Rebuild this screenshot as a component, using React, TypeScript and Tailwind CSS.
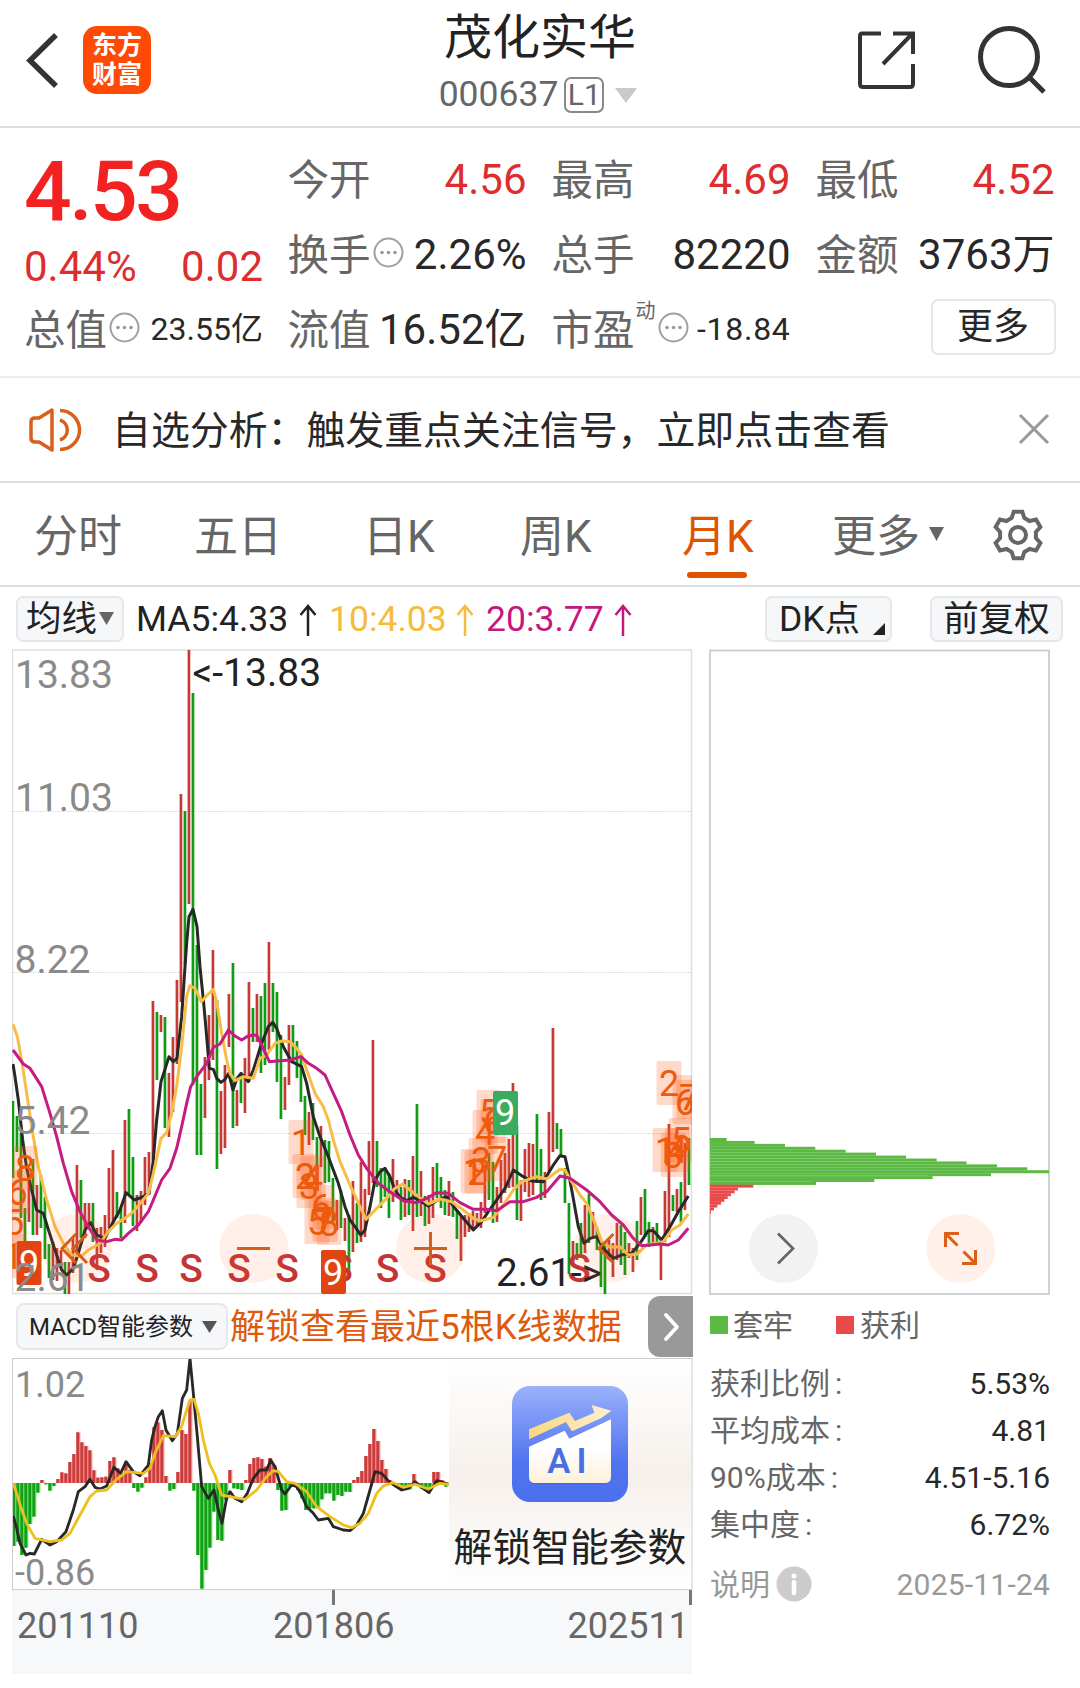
import React from 'react';

interface Candle {
  up: boolean;
  top: number;
  bottom: number;
}

// Monthly candles, left to right: direction, high, low
const CANDLE_DATA = `
g1101-1178 g1116-1152 g1133-1218 g1208-1242 r1175-1222 g1159-1235 r1185-1235 g1175-1228 g1197-1259 g1244-1278
r1242-1280 r1248-1281 r1250-1268 g1262-1294 r1262-1294 r1238-1273 r1165-1253 g1180-1238 r1203-1238 r1203-1228
g1203-1242 r1228-1270 r1227-1253 r1215-1247 r1168-1228 r1150-1225 g1192-1218 g1208-1238 r1120-1223 g1109-1195
g1157-1226 r1195-1231 r1191-1223 r1157-1205 r1152-1195 r1001-1160 g1012-1080 r1015-1032 g1017-1128 r1073-1137
r1037-1112 r980-1064 r794-1002 g811-965 r650-904 g693-1085 g945-1155 g1084-1155 r1057-1118 r1015-1080
r950-1060 g1000-1169 r1091-1154 r1065-1148 r994-1047 g963-1128 r1090-1126 g1075-1103 r1058-1113 r982-1082
g1008-1042 r994-1042 g996-1073 g983-1065 r942-1050 g983-1032 g992-1082 g1035-1119 r1077-1110 r1025-1085
g1025-1063 g1041-1078 g1055-1102 g1096-1135 r1112-1145 g1103-1140 g1137-1190 r1126-1167 g1140-1183 g1141-1182
g1178-1223 r1200-1230 g1190-1228 r1218-1241 g1215-1270 r1181-1252 g1203-1243 r1162-1242 r1189-1237 r1141-1195
r1040-1183 g1141-1187 g1168-1208 g1170-1197 g1173-1218 r1159-1202 r1180-1197 g1187-1220 r1179-1217 g1180-1215
r1156-1231 g1104-1217 r1171-1216 g1196-1226 r1195-1224 r1167-1218 g1163-1198 g1177-1208 g1190-1215 r1181-1216
g1192-1217 g1210-1239 r1215-1261 r1215-1237 r1213-1232 r1211-1229 r1213-1226 r1202-1228 r1165-1213 g1153-1200
g1162-1223 r1187-1222 r1160-1203 r1153-1193 r1139-1188 r1083-1187 g1125-1220 r1180-1221 r1149-1192 r1143-1197
r1144-1195 g1114-1183 g1149-1200 r1172-1198 r1112-1173 r1028-1152 g1123-1149 g1129-1157 g1168-1203 g1203-1274
r1241-1260 g1243-1260 g1223-1258 r1205-1253 g1194-1243 r1212-1238 g1228-1250 g1243-1287 g1243-1294 r1240-1260
r1243-1277 r1223-1260 g1225-1265 g1232-1275 r1243-1258 r1248-1272 g1221-1260 r1197-1235 g1189-1237 g1222-1247
r1227-1243 g1223-1242 r1238-1280 r1191-1242 r1124-1237 g1195-1211 r1189-1212 g1182-1222 r1143-1210 g1138-1185`;

const CANDLES: Candle[] = CANDLE_DATA.trim()
  .split(/\s+/)
  .map((item) => {
    const [top, bottom] = item.slice(1).split('-').map(Number);
    return { up: item[0] === 'r', top, bottom };
  });

// Lines and histogram use thirds of a pixel
const MA5 =
  '39,312 45,350 55,420 68,540 80,625 95,690 110,750 130,760 147,815 165,870 185,930 200,945 220,925 235,880 255,810 272,788 290,825 315,835 340,785 360,750 378,698 403,720 430,710 447,700 460,600 470,480 483,365 507,290 520,305 531,295 545,170 553,50 560,-50 567,-130 579,-152 591,-100 600,20 612,140 620,230 628,325 640,328 650,355 663,367 675,358 686,340 699,390 711,355 723,340 745,365 760,330 783,255 805,200 818,187 830,205 850,260 875,305 905,320 920,370 940,470 960,530 985,590 1015,670 1035,740 1050,780 1065,800 1082,825 1095,810 1110,740 1125,660 1140,635 1155,625 1170,650 1185,690 1200,712 1220,722 1240,712 1260,722 1285,738 1310,722 1340,710 1365,745 1390,775 1420,810 1445,785 1465,755 1490,720 1515,685 1540,630 1570,650 1595,663 1630,665 1660,615 1680,587 1695,590 1705,635 1717,700 1735,800 1752,850 1770,835 1790,830 1810,865 1840,895 1865,885 1895,880 1920,850 1945,812 1960,812 1985,840 2010,800 2035,755 2065,708';
const MA10 =
  '39,193 52,230 65,300 80,400 95,500 115,620 140,720 165,800 190,850 215,885 245,888 265,870 300,850 325,815 350,790 375,775 400,755 425,725 445,700 460,640 483,535 500,518 515,460 530,380 545,260 560,110 569,77 585,85 604,125 622,105 640,88 650,125 665,220 680,300 690,340 705,362 730,350 760,355 780,295 800,285 825,250 845,243 870,245 890,265 905,285 920,330 945,400 970,440 985,480 1000,540 1020,605 1050,675 1080,740 1098,778 1130,745 1160,715 1185,685 1208,672 1230,690 1255,710 1285,732 1320,717 1355,725 1390,750 1420,775 1440,783 1480,772 1510,735 1540,690 1565,665 1610,650 1640,657 1680,628 1695,630 1715,665 1740,705 1760,730 1785,790 1805,845 1830,862 1860,860 1885,885 1910,883 1940,855 1990,845 2015,810 2040,795 2065,762';
const MA20 =
  '39,270 70,312 90,325 125,380 150,460 170,530 190,610 215,695 240,755 265,800 290,840 320,845 345,838 365,840 385,820 415,795 445,755 460,720 485,660 510,625 530,565 545,500 560,430 572,380 590,350 620,310 640,262 660,252 685,210 705,228 725,240 745,227 770,225 785,255 808,305 830,303 870,300 903,290 925,310 950,325 975,345 1000,400 1025,455 1050,525 1075,585 1100,625 1135,670 1170,695 1210,722 1250,728 1280,715 1310,698 1345,700 1380,728 1420,748 1460,748 1490,752 1530,725 1570,725 1610,712 1640,695 1680,648 1710,655 1760,690 1800,725 1835,765 1870,795 1900,835 1925,857 1980,852 2005,855 2035,840 2065,805';

const DIF =
  '40,678 50,715 60,760 78,795 90,790 103,792 125,748 150,765 170,755 198,725 220,660 235,605 255,590 270,568 285,592 300,597 320,588 342,532 362,550 378,515 400,545 420,557 445,525 455,450 465,410 475,380 487,362 498,420 517,452 532,430 547,325 560,300 570,205 580,310 592,440 605,590 625,625 642,600 655,660 666,700 680,625 690,605 705,625 725,635 742,610 760,565 780,540 800,540 812,510 825,530 845,600 855,612 875,585 890,590 905,615 920,650 940,670 955,690 985,685 1000,710 1030,720 1050,722 1070,705 1090,670 1110,600 1125,545 1145,550 1170,578 1205,600 1225,595 1245,575 1265,592 1287,608 1310,572 1345,582';
const DEA =
  '40,580 50,610 62,650 80,700 105,745 150,755 185,750 210,730 240,675 270,620 290,603 320,600 350,568 380,545 430,550 450,535 465,490 490,437 525,440 545,410 560,360 570,330 582,328 595,370 610,450 628,520 645,555 665,615 690,620 735,628 770,600 800,560 820,542 835,545 860,575 885,580 920,605 950,650 990,680 1030,705 1055,713 1080,700 1105,670 1130,610 1150,588 1180,578 1210,592 1245,583 1285,597 1320,580 1347,583';

const MACD_ZERO = 579;
const MACD_TIPS = [
  768, 755, 795, 773, 702, 680, 608, 570, 583, 602, 588, 567, 547, 550, 516, 492, 427, 457, 468, 481, 541, 563, 562,
  560, 513, 502, 535, 550, 516, 540, 594, 605, 593, 562, 520, 412, 397, 420, 558, 602, 597, 546, 420, 432, 332, 602,
  795, 896, 840, 773, 665, 750, 752, 630, 540, 595, 597, 600, 570, 522, 504, 502, 507, 530, 504, 525, 600, 662, 660,
  590, 583, 600, 625, 660, 655, 655, 655, 628, 610, 610, 632, 615, 618, 605, 606, 570, 561, 543, 498, 462, 417, 453,
  510, 537, 570, 583, 590, 603, 598, 598, 552, 584, 597, 600, 598, 546, 546, 570, 590,
];

// Nine-turn counters: [label, centre x, centre y]
const COUNTERS: [string, number, number][] = [
  ['8', 25, 1168], ['6', 17.5, 1192], ['5', 14, 1222], ['1', 13, 1256],
  ['1', 301, 1142], ['2', 305, 1176], ['3', 309, 1186], ['4', 313, 1178], ['5', 317, 1222], ['6', 321, 1207], ['7', 325, 1220], ['8', 329, 1223],
  ['1', 473, 1171], ['2', 477, 1172], ['3', 481, 1160], ['4', 485, 1132], ['5', 489, 1112], ['6', 493, 1121], ['7', 497, 1159],
  ['1', 665, 1150], ['2', 669, 1083], ['3', 673, 1155], ['4', 677, 1150], ['5', 681, 1140], ['6', 685, 1102], ['7', 689, 1097],
];

const SELL_MARKS = [99, 147, 191, 239, 287, 341, 387.5, 435, 579];

const CHIPS_GREEN = [113, 197, 288, 379, 470, 561, 651, 743, 833, 924, 1015, 1080, 906, 731, 556, 381];
const CHIPS_RED = [193, 147, 137, 126, 116, 106, 96, 85, 75, 66];

const GEAR_POINTS = [0, 1, 2, 3, 4, 5]
  .flatMap((k) => {
    const a = (k * Math.PI) / 3;
    return [[-19, -51], [-13, -70], [13, -70], [19, -51]].map(
      ([x, y]) => `${x * Math.cos(a) - y * Math.sin(a)},${x * Math.sin(a) + y * Math.cos(a)}`
    );
  })
  .join(' ');

const Dots: React.FC = () => (
  <svg className="w-[31px] h-[31px] shrink-0 -mt-1.5 ml-[2px]" viewBox="0 0 31 31">
    <circle cx="15.5" cy="15.5" r="14" fill="none" stroke="#a0a0a0" strokeWidth="2" />
    <circle cx="9" cy="15.5" r="1.8" fill="#999" />
    <circle cx="15.5" cy="15.5" r="1.8" fill="#999" />
    <circle cx="22" cy="15.5" r="1.8" fill="#999" />
  </svg>
);

const Header: React.FC = () => (
  <header className="flex justify-between h-[128px] border-b-2 border-[#dcdcdc]">
    <div className="flex w-[400px] pl-[25px] pt-[26px]">
      <svg className="w-[36px] h-[68px]" viewBox="0 0 36 68" fill="none" stroke="#333" strokeWidth="5.5">
        <path d="M31 9 L5 34.5 L31 60" />
      </svg>
      <div className="ml-[22px] w-[68px] h-[68px] rounded-[14px] bg-[#ff4a05] text-white text-[25px] leading-[29px] font-bold text-center pt-[5px]">
        <p>东方</p>
        <p>财富</p>
      </div>
    </div>
    <div className="flex flex-col items-center w-[280px]">
      <h1 className="text-[48px] leading-[56px] mt-[10px] text-[#222]">茂化实华</h1>
      <div className="flex items-center h-[40px] mt-[9px] -ml-[4px] text-[#666]">
        <span className="text-[35.5px] leading-none">000637</span>
        <span className="ml-[6px] flex items-center justify-center w-[40px] h-[36px] border-2 border-[#888] rounded-[7px] text-[30px] leading-none">L1</span>
        <svg className="ml-[11px] w-[22px] h-[15px]" viewBox="0 0 22 15">
          <path d="M0 0H22L11 15Z" fill="#c9c9c9" />
        </svg>
      </div>
    </div>
    <div className="flex w-[400px] justify-end pt-[24px] pr-[32px]">
      <svg className="w-[60px] h-[70px]" viewBox="0 0 60 70" fill="none" stroke="#333" strokeWidth="4">
        <path d="M25 9.500H6Q4 9.500 4 12V60Q4 63 7 63H54Q57 63 57 60V40" />
        <path d="M37 9.500H57V30M56 10L27 40" />
      </svg>
      <svg className="ml-[60px] w-[72px] h-[80px]" viewBox="0 0 72 80" fill="none" stroke="#333" strokeWidth="5">
        <circle cx="33" cy="33" r="28.500" />
        <path d="M53 53L68 68" />
      </svg>
    </div>
  </header>
);

interface StatProps {
  label: string;
  value: string;
  red?: boolean;
  small?: boolean;
  dots?: boolean;
  sup?: string;
}

const Stat: React.FC<StatProps> = ({ label, value, red, small, dots, sup }) => (
  <div className="flex items-center justify-between w-[239px] whitespace-nowrap">
    <span className="relative flex items-center text-[#666] text-[41.500px] pt-[2px]">
      {label}
      {sup && <span className="ml-px w-[20px] -mt-[38px] text-[20px]">{sup}</span>}
      {dots && <Dots />}
    </span>
    <span className={`${small ? 'text-[32px]' : 'text-[42px]'} ${sup ? 'tracking-[0.7px]' : ''} ${red ? 'text-[#dd2d2d]' : 'text-[#282828]'}`}>{value}</span>
  </div>
);

const Quote: React.FC = () => (
  <section className="flex h-[250px] border-b-2 border-[#ececec] pt-[14px] pl-[24px] leading-[75px]">
    <div className="w-[239px]">
      <p className="text-[84px] leading-[100px] tracking-[-2.500px] font-medium text-[#f32222]">4.53</p>
      <div className="flex justify-between text-[42px] leading-[50px] text-[#dd2d2d]">
        <span>0.44%</span>
        <span>0.02</span>
      </div>
      <div className="flex h-[75px]">
        <Stat label="总值" value="23.55亿" small dots />
      </div>
    </div>
    <div className="grid grid-cols-[264px_264px_239px] grid-rows-[75px_75px_75px] ml-[24.500px]">
      <Stat label="今开" value="4.56" red />
      <Stat label="最高" value="4.69" red />
      <Stat label="最低" value="4.52" red />
      <Stat label="换手" value="2.26%" dots />
      <Stat label="总手" value="82220" />
      <Stat label="金额" value="3763万" />
      <Stat label="流值" value="16.52亿" />
      <Stat label="市盈" value="-18.84" small dots sup="动" />
      <button className="justify-self-end self-center w-[125px] h-[56px] -mt-[6px] -mr-[1px] border-2 border-[#e6e6e6] rounded-[7px] text-[36px] leading-[50px] text-[#282828]">更多</button>
    </div>
  </section>
);

const Notice: React.FC = () => (
  <section className="flex items-center h-[105px] border-b-2 border-[#dcdcdc] pl-[29px] pr-[30px]">
    <svg className="w-[54px] h-[46px]" viewBox="0 0 54 46" fill="none" stroke="#d9601a" strokeWidth="3.500">
      <path d="M10 11H6Q2 11 2 15V31Q2 35 6 35H10L23 43V3Z" strokeLinejoin="round" />
      <path d="M31 13A10.500 10.500 0 0 1 31 33M31 3.500A19.500 19.500 0 0 1 31 42.500" />
    </svg>
    <p className="ml-[29px] flex-1 pt-[3px] text-[38.900px] text-[#282828] whitespace-nowrap">自选分析：触发重点关注信号，立即点击查看</p>
    <svg className="w-[32px] h-[32px] -mt-[2px]" viewBox="0 0 32 32" stroke="#999" strokeWidth="3">
      <path d="M2 2L30 30M30 2L2 30" />
    </svg>
  </section>
);

const Tabs: React.FC = () => (
  <nav className="flex h-[104px] border-b-2 border-[#dcdcdc] text-[44px] leading-[109px] text-[#666] whitespace-nowrap">
    <span className="ml-[34px] w-[160px]">分时</span>
    <span className="w-[169px]">五日</span>
    <span className="w-[157px]">日K</span>
    <span className="w-[162px]">周K</span>
    <span className="relative w-[150px] text-[#dd5500]">
      月K
      <span className="absolute left-[5px] top-[89px] w-[60px] h-[6px] rounded-full bg-[#dd5500]" />
    </span>
    <span className="w-[97px]">更多</span>
    <svg className="mt-[44px] w-[15px] h-[14px]" viewBox="0 0 15 14">
      <path d="M0 0H15L7.500 14Z" fill="#666" />
    </svg>
    <svg className="mt-[25.500px] ml-[48px] w-[52px] h-[52px]" viewBox="-78 -78 156 156" fill="none" stroke="#666" strokeWidth="12">
      <polygon points={GEAR_POINTS} />
      <circle r="24" />
    </svg>
  </nav>
);

const Toolbar: React.FC = () => (
  <div className="flex items-center h-[63px] pl-[16px] text-[35.500px] leading-none whitespace-nowrap">
    <button className="flex items-center w-[108px] h-[46px] pl-[8px] pt-[2px] bg-[#f6f7f9] border-2 border-[#e5e7ea] rounded-[7px] text-[#222]">
      均线
      <svg className="ml-[2px] -mt-[3px] w-[15px] h-[13px]" viewBox="0 0 15 13">
        <path d="M0 0H15L7.500 13Z" fill="#666" />
      </svg>
    </button>
    <div className="flex items-center ml-[12px] w-[629px] pt-[2px]">
      <span className="w-[163px] text-[#222]">MA5:4.33</span>
      <ArrowUp color="#222" />
      <span className="ml-[12px] w-[127px] text-[#f5bb3c]">10:4.03</span>
      <ArrowUp color="#f5bb3c" />
      <span className="ml-[12px] w-[128px] text-[#c4177f]">20:3.77</span>
      <ArrowUp color="#c4177f" />
    </div>
    <button className="relative w-[127px] h-[46px] pr-[18px] pt-[3px] bg-[#f6f7f9] border-2 border-[#e5e7ea] rounded-[7px] text-[#222]">
      DK点
      <svg className="absolute right-[5px] bottom-[5px] w-[12px] h-[12px]" viewBox="0 0 12 12">
        <path d="M12 0V12H0Z" fill="#222" />
      </svg>
    </button>
    <button className="ml-[38px] w-[133px] h-[46px] pt-[3px] bg-[#f6f7f9] border-2 border-[#e5e7ea] rounded-[7px] text-[#222]">前复权</button>
  </div>
);

const ArrowUp: React.FC<{ color: string }> = ({ color }) => (
  <svg className="w-[18px] h-[32px]" viewBox="0 0 18 32" fill="none" stroke={color} strokeWidth="2.500">
    <path d="M9 32V2M1.500 11L9 2L16.500 11" />
  </svg>
);

const KLineChart: React.FC = () => (
  <svg className="w-[681px] h-[646px] block" viewBox="12 649 681 646" fontFamily="Roboto">
    <defs>
      <clipPath id="kline">
        <rect x="12" y="650" width="680" height="645" />
      </clipPath>
    </defs>
    <rect x="12.5" y="650" width="679" height="643.500" fill="none" stroke="#dedede" strokeWidth="1.500" />
    {[811.5, 972.5, 1133.5].map((y) => (
      <path key={y} d={`M13 ${y}H691`} stroke="#c8c8c8" strokeDasharray="1 1.500" />
    ))}
    <g clipPath="url(#kline)">
      {CANDLES.map((c, i) => (
        <rect key={i} x={11.6 + i * 4} y={c.top} width="2.700" height={c.bottom - c.top} fill={c.up ? '#c63a35' : '#0f9b12'} />
      ))}
      <g transform="translate(0 960) scale(0.33333)" fill="none" strokeWidth="9" strokeLinejoin="round">
        <polyline points={MA5} stroke="#282828" />
        <polyline points={MA10} stroke="#f8bd47" />
        <polyline points={MA20} stroke="#c41c82" />
      </g>
      <g fontSize="39" fontWeight="500" fill="#c53435" textAnchor="middle">
        {SELL_MARKS.map((x) => (
          <text key={x} x={x} y="1282">S</text>
        ))}
      </g>
      <text x="496" y="1286" fontSize="38.500" fill="#222">2.61-&gt;</text>
      {COUNTERS.map(([, x, y], i) => (
        <rect key={i} x={x - 12.5} y={y - 22} width="25" height="44" rx="2" fill="#ff5a14" opacity="0.230" />
      ))}
      <g fontSize="36" fill="#ee5a0c" textAnchor="middle">
        {COUNTERS.map(([label, x, y], i) => (
          <text key={i} x={x} y={y + 12.5}>{label}</text>
        ))}
      </g>
      <g fontSize="36" textAnchor="middle">
        <rect x="16.500" y="1241" width="25" height="44" rx="2" fill="#e24411" />
        <text x="29" y="1276" fill="#fff">9</text>
        <rect x="321" y="1250" width="25" height="44" rx="2" fill="#e24411" />
        <text x="333" y="1285" fill="#fff">9</text>
        <rect x="493" y="1091" width="25" height="44" rx="2" fill="#3bac5f" />
        <text x="505" y="1125" fill="#fff">9</text>
      </g>
      <g fill="#ff6a28" opacity="0.100">
        <circle cx="77" cy="1248.500" r="34.500" />
        <circle cx="253.700" cy="1248.500" r="34.500" />
        <circle cx="430.500" cy="1248.500" r="34.500" />
        <circle cx="608" cy="1248.500" r="34.500" />
      </g>
      <g fill="none" stroke="#d2601a" strokeWidth="3">
        <path d="M76 1234L62 1248.500L76 1263M87 1234L73 1248.500L87 1263" />
        <path d="M237 1248.500H270" />
        <path d="M414 1248.500H447M430.500 1232V1265" />
        <path d="M613.500 1234L599 1248.500L613.500 1263" />
      </g>
    </g>
    <g fontSize="39" fill="#8a8a8a">
      <text x="15" y="688">13.83</text>
      <text x="15" y="811">11.03</text>
      <text x="14.500" y="972.500">8.22</text>
      <text x="14.500" y="1133.500">5.42</text>
      <text x="14.500" y="1290.500">2.61</text>
    </g>
    <text x="192.500" y="685.700" fontSize="39" fill="#222">&lt;-13.83</text>
  </svg>
);

const MacdBar: React.FC = () => (
  <div className="flex items-center h-[63px] whitespace-nowrap">
    <button className="flex items-center ml-[4px] w-[212px] h-[47px] pl-[11px] bg-[#f6f7f9] border-2 border-[#e5e7ea] rounded-[8px] text-[24px] text-[#222]">
      MACD智能参数
      <svg className="ml-[9px] w-[15px] h-[12px]" viewBox="0 0 15 12">
        <path d="M0 0H15L7.500 12Z" fill="#555" />
      </svg>
    </button>
    <span className="ml-[2px] pt-[3px] flex-1 text-[35px] text-[#dd5a0e]">解锁查看最近5根K线数据</span>
    <button className="flex items-center justify-center w-[45px] h-[61px] bg-[#999] rounded-l-[12px]">
      <svg className="w-[18px] h-[30px] ml-[2px]" viewBox="0 0 18 30" fill="none" stroke="#fff" strokeWidth="3.800" strokeLinecap="round" strokeLinejoin="round">
        <path d="M3 3L14 15L3 27" />
      </svg>
    </button>
  </div>
);

const MacdChart: React.FC = () => (
  <div className="relative h-[232px]">
    <svg className="w-[681px] h-[232px] block" viewBox="12 1358 681 232" fontFamily="Roboto">
      <g transform="translate(0 1290) scale(0.33333)">
        {MACD_TIPS.map((tip, i) => {
          const up = tip < MACD_ZERO;
          const x = 37 + i * 12;
          const y = Math.min(tip, MACD_ZERO);
          const h = Math.abs(tip - MACD_ZERO);
          return (
            <g key={i}>
              <rect x={x} y={y} width="12" height={h} fill={up ? '#f58080' : '#5fd860'} />
              <rect x={x} y={y} width="8" height={h} fill={up ? '#c93c3c' : '#14a016'} />
            </g>
          );
        })}
        <g fill="none" strokeWidth="8.500" strokeLinejoin="round">
          <polyline points={DIF} stroke="#282828" />
          <polyline points={DEA} stroke="#edc01f" />
        </g>
      </g>
      <g fontSize="36" fill="#8a8a8a">
        <text x="15" y="1396.700">1.02</text>
        <text x="15" y="1585">-0.86</text>
      </g>
      <rect x="12.500" y="1358.500" width="679.500" height="231" fill="none" stroke="#ccc" />
    </svg>
    <div className="absolute left-[437px] top-[1px] w-[242px] h-[230px] flex flex-col items-center bg-linear-to-b from-white via-[#f6f0eb] to-white">
      <svg className="mt-[27px] w-[116px] h-[116px]" viewBox="0 0 348 348">
        <defs>
          <linearGradient id="aiBlue" x1="0" y1="0" x2="0" y2="1">
            <stop offset="0" stopColor="#9ab1fc" />
            <stop offset="0.650" stopColor="#5174ee" />
            <stop offset="1" stopColor="#4a70ee" />
          </linearGradient>
          <linearGradient id="aiCard" x1="0" y1="0" x2="0" y2="1">
            <stop offset="0.500" stopColor="#fff" />
            <stop offset="1" stopColor="#fdf0d8" />
          </linearGradient>
          <linearGradient id="aiArrow" x1="0" y1="0" x2="1" y2="0">
            <stop offset="0" stopColor="#fbd77c" />
            <stop offset="1" stopColor="#fdf0d2" />
          </linearGradient>
        </defs>
        <rect width="348" height="348" rx="54" fill="url(#aiBlue)" />
        <path d="M52 192L158 138L172 162L297 105V276Q297 295 278 295H71Q52 295 52 276Z" fill="#3553c8" opacity="0.350" />
        <path d="M51 182L158 134L172 158L297 100V273Q297 291 279 291H69Q51 291 51 273Z" fill="url(#aiCard)" />
        <path d="M51 130L172 80L189 105L247 80L239 57L298 74L268 96L180 136L162 108L51 160Z" fill="url(#aiArrow)" />
        <text x="106" y="261" fontFamily="Roboto" fontSize="104" fontWeight="600" letterSpacing="18" fill="#4a6fe3">AI</text>
      </svg>
      <p className="mt-[19px] text-[38.800px] leading-[54px] text-[#222] whitespace-nowrap">解锁智能参数</p>
    </div>
  </div>
);

const TimeAxis: React.FC = () => (
  <div className="w-[680px] h-[84px] bg-[#f7f8fa]">
    <div className="flex justify-between pl-[320px]">
      <span className="w-[3px] h-[15px] bg-[#777]" />
      <span className="w-[3px] h-[15px] bg-[#777]" />
    </div>
    <div className="flex mt-[1px] pl-[5px] pr-[3px] text-[36px] leading-[40px] text-[#666]">
      <span className="w-[256px]">201110</span>
      <span>201806</span>
      <span className="ml-auto">202511</span>
    </div>
  </div>
);

const CostPanel: React.FC = () => {
  const rows = [
    { label: '获利比例', value: '5.53%' },
    { label: '平均成本', value: '4.81' },
    { label: '90%成本', value: '4.51-5.16' },
    { label: '集中度', value: '6.72%' },
  ];
  return (
    <aside className="ml-[16px] w-[341px] text-[30px]">
      <svg className="w-[341px] h-[646px] block" viewBox="710 649 341 646">
        <rect x="711" y="650.500" width="339" height="643.500" fill="none" stroke="#ccc" strokeWidth="1.800" />
        {CHIPS_GREEN.map((w, i) => (
          <rect key={i} x="711" y={1138 + i * 2.93} width={(w - 63) / 3} height="3" fill="#5cb944" />
        ))}
        {[1152, 1155, 1158, 1161, 1164, 1175, 1181].map((y) => (
          <path key={y} d={`M711 ${y + 0.5}H${y < 1160 || y > 1180 ? 812 : 930}`} stroke="#7ccb68" strokeWidth="0.800" />
        ))}
        {CHIPS_RED.map((w, i) => (
          <rect key={i} x="711" y={1184.7 + i * 2.85} width={(w - 63) / 3} height="2.900" fill="#e84a4a" />
        ))}
        <circle cx="784.500" cy="1248.500" r="34.500" fill="#f2f2f2" />
        <path d="M779 1233.500L794 1248.500L779 1263.500" fill="none" stroke="#666" strokeWidth="2.700" />
        <circle cx="961.700" cy="1248.500" r="34.500" fill="#fff1ea" />
        <path d="M960 1233.500H946.500V1247M947 1234L958.500 1245.500M963 1263.500H976.500V1250M976 1263L964.500 1251.500" fill="none" stroke="#dc5f17" strokeWidth="3" />
      </svg>
      <div className="flex items-center h-[60px] text-[#666]">
        <span className="w-[18px] h-[18px] ml-px bg-[#5cb944]" />
        <span className="ml-[5px] w-[103px]">套牢</span>
        <span className="w-[18px] h-[18px] bg-[#e84a4a]" />
        <span className="ml-[6px]">获利</span>
      </div>
      <dl className="mt-[5px]">
        {rows.map((row) => (
          <div key={row.label} className="flex justify-between h-[47px] leading-[47px]">
            <dt className="text-[#666] ml-px">
              {row.label}
              <span className="ml-[5px]">:</span>
            </dt>
            <dd className="text-[#282828]">{row.value}</dd>
          </div>
        ))}
      </dl>
      <div className="flex items-center h-[48px] mt-[12px] text-[#999]">
        <span className="ml-px">说明</span>
        <svg className="ml-[6px] w-[36px] h-[36px]" viewBox="0 0 36 36">
          <circle cx="18" cy="18" r="17.500" fill="#ccc" />
          <circle cx="18" cy="10" r="2.500" fill="#fff" />
          <path d="M18 16V27" stroke="#fff" strokeWidth="4.500" strokeLinecap="round" />
        </svg>
        <span className="ml-auto tracking-[0.2px]">2025-11-24</span>
      </div>
    </aside>
  );
};

const App: React.FC = () => (
  <div className="w-[1080px] h-[1688px] overflow-hidden bg-white font-['Roboto','Noto_Sans_CJK_SC',sans-serif]">
    <Header />
    <Quote />
    <Notice />
    <Tabs />
    <Toolbar />
    <main className="flex -mt-px pl-[12px]">
      <div className="w-[681px]">
        <KLineChart />
        <MacdBar />
        <MacdChart />
        <TimeAxis />
      </div>
      <CostPanel />
    </main>
  </div>
);

export default App;
